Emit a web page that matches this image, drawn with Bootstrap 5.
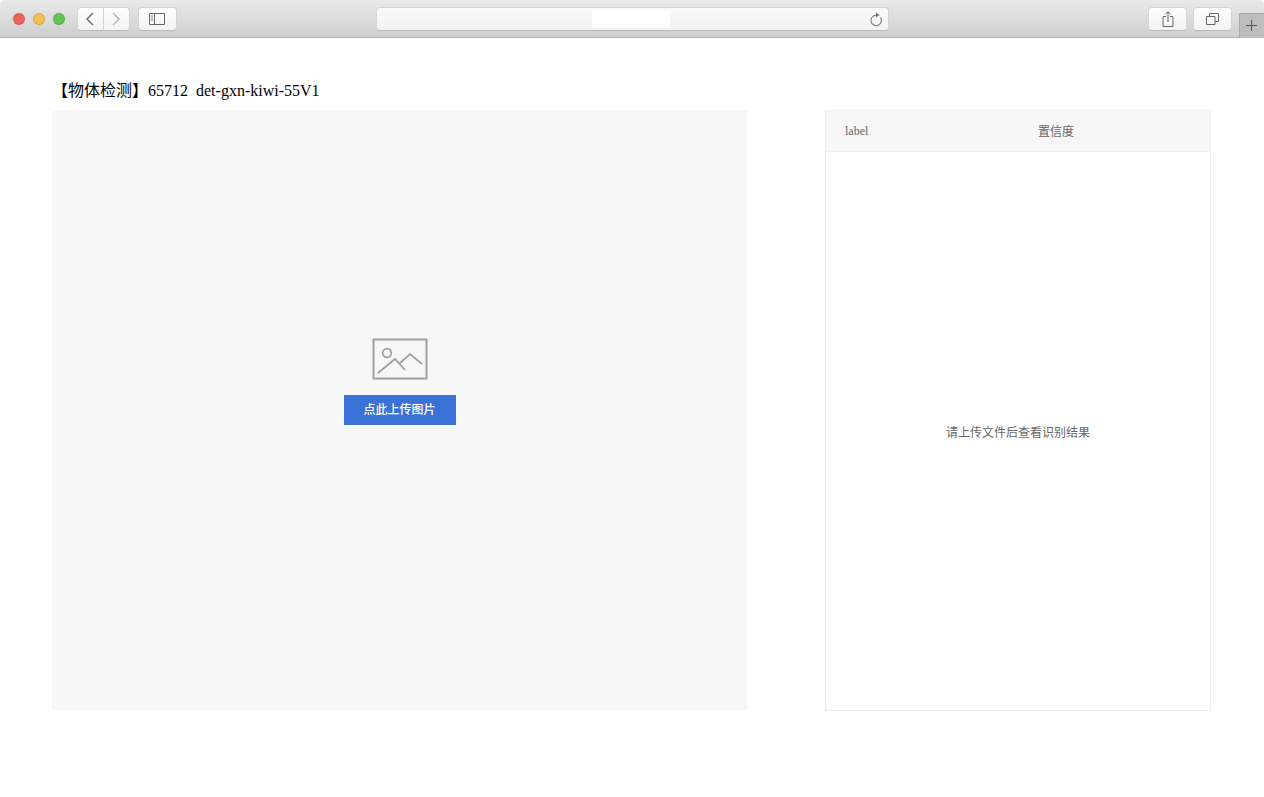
<!DOCTYPE html>
<html lang="zh"><head><meta charset="utf-8"><title>物体检测</title>
<link href="https://cdn.jsdelivr.net/npm/bootstrap@5.3.0/dist/css/bootstrap.min.css" rel="stylesheet">
<style>
html,body{height:100%;background:#fff}
body{font-family:"Liberation Serif","Noto Sans CJK SC",serif;overflow:hidden;border-radius:5px 5px 0 0}
.chrome-bar{height:38px;background:linear-gradient(#e9e9e9,#cfcfcf);border-bottom:1px solid #b1b1b1;padding-top:7px}
.tl{display:block;width:12px;height:12px;margin-top:6px;border-radius:50%;border:.5px solid rgba(0,0,0,.12)}
.tl-r{background:#ec6559;margin-left:13px}.tl-y{background:#f5bf4f;margin-left:8px}.tl-g{background:#60c454;margin-left:8px}
.tb{height:24px;background:linear-gradient(#fff,#f3f3f3);border:1px solid #d4d4d4;border-bottom-color:#b9b9b9;border-radius:4px;padding:0}
.tb-b{width:27px;margin-left:12px;border-radius:4px 0 0 4px}
.tb-f{width:26px;border-left:0;border-radius:0 4px 4px 0}
.tb-s{width:39px;margin-left:8px}
.addr{width:515px;margin-left:199px;background:linear-gradient(#fafafa,#f2f2f2);position:relative}
.addr-mask{width:78px;height:18px;background:#fff;margin-right:3px}
.addr-reload{position:absolute;right:5px;top:4px}
.tb-share{width:39px;margin-left:259px}
.tb-tabs{width:39px;margin-left:6px}
.tab-plus{width:25px;height:25px;margin-left:7px;margin-top:6px;padding:0 2px 2px 0;background:#bdbdbd;border-left:1px solid #aaa;border-top:1px solid #aaa}
.page-wrap{padding:42px 53px 0 52px}
.page-title{font-size:16px;line-height:22px;color:#000;margin:0 0 8px;font-weight:400;white-space:pre}
.upload-panel{width:695px;height:600px;background:#f7f7f7;padding-bottom:58px}
.pic-icon{display:block;margin-bottom:15px}
.up-btn{width:112px;height:30px;background:#3b72d8;color:#fff;font-size:12px;border:0;border-radius:0;padding:0;font-weight:500}
.result-panel{width:386px;height:601px;border:1px solid #eee;color:#666;font-size:12px}
.res-head{height:41px;background:#f7f7f7;border-bottom:1px solid #eee;flex:none}
.res-label{width:212px;padding-left:19px}
.res-conf{padding-top:1px}
.res-empty{padding-top:3px}
</style></head>
<body>
<div class="chrome-bar d-flex align-items-start">
  <span class="tl tl-r"></span>
  <span class="tl tl-y"></span>
  <span class="tl tl-g"></span>
  <button class="tb tb-b d-flex align-items-center justify-content-center" aria-label="back"><svg width="10" height="14" viewBox="0 0 10 14"><path d="M8 1 2 7l6 6" fill="none" stroke="#666" stroke-width="1.4"/></svg></button>
  <button class="tb tb-f d-flex align-items-center justify-content-center" aria-label="forward"><svg width="10" height="14" viewBox="0 0 10 14"><path d="m2 1 6 6-6 6" fill="none" stroke="#b4b4b4" stroke-width="1.4"/></svg></button>
  <button class="tb tb-s d-flex align-items-center justify-content-center" aria-label="sidebar"><svg width="16" height="12" viewBox="0 0 16 12"><path d="M.5.5h15v11H.5zM5.500.5v11" fill="none" stroke="#666"/><path d="M2 3h2M2 5h2M2 7h2" stroke="#777"/></svg></button>
  <div class="tb addr d-flex align-items-center justify-content-center"><div class="addr-mask"></div>
    <svg class="addr-reload" width="14" height="15" viewBox="0 0 14 15"><path d="M11.500 5.500A5.200 5.200 0 1 1 7 3.200" fill="none" stroke="#777" stroke-width="1.1"/><path d="M7 .6 10.600 3 7 5.400z" fill="#777"/></svg></div>
  <button class="tb tb-share d-flex align-items-center justify-content-center" aria-label="share"><svg width="12" height="16" viewBox="0 0 12 16"><path d="M4 5.500H1v10h10v-10H8M6 11V1M3.500 3.200 6 .8l2.500 2.400" fill="none" stroke="#666"/></svg></button>
  <button class="tb tb-tabs d-flex align-items-center justify-content-center" aria-label="tabs"><svg width="13" height="12" viewBox="0 0 13 12"><path d="M.5 3.500h8.500v8H.5zM3.500 3.500V.5h9v8H9" fill="none" stroke="#666"/></svg></button>
  <div class="tab-plus d-flex align-items-center justify-content-center"><svg width="11" height="11" viewBox="0 0 11 11"><path d="M5.500 0v11M0 5.500h11" stroke="#555"/></svg></div>
</div>
<div class="page-wrap">
  <h1 class="page-title">【物体检测】65712  det-gxn-kiwi-55V1</h1>
  <div class="d-flex justify-content-between align-items-start">
    <div class="upload-panel d-flex flex-column align-items-center justify-content-center">
      <svg class="pic-icon" width="56" height="42" viewBox="0 0 56 42"><rect x="1.500" y="1.500" width="53" height="39" fill="none" stroke="#9e9e9e" stroke-width="2"/><circle cx="15" cy="15" r="4.300" fill="none" stroke="#9e9e9e" stroke-width="1.700"/><path d="m6 35 17-14 10 11M28 25l10-9 12 10" fill="none" stroke="#9e9e9e" stroke-width="1.700"/></svg>
      <button class="btn up-btn">点此上传图片</button>
    </div>
    <div class="result-panel d-flex flex-column">
      <div class="res-head d-flex align-items-center"><div class="res-label">label</div><div class="res-conf">置信度</div></div>
      <div class="res-empty flex-grow-1 d-flex align-items-center justify-content-center">请上传文件后查看识别结果</div>
    </div>
  </div>
</div>
</body></html>
